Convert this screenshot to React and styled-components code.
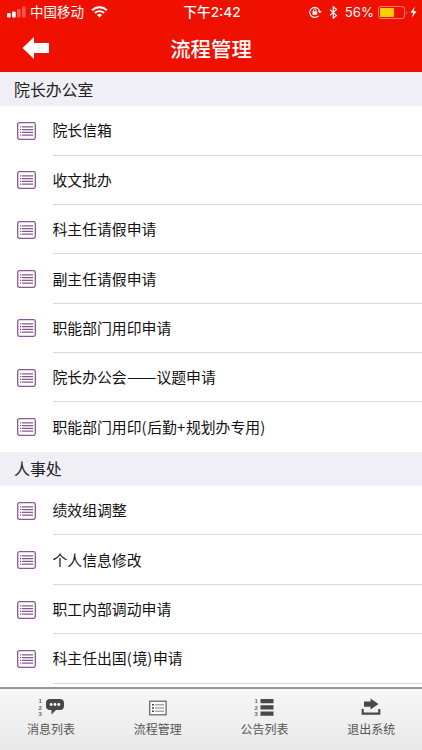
import React from 'react';
import styled, { createGlobalStyle } from 'styled-components';

const sections = [
  {
    title: '院长办公室',
    items: [
      '院长信箱',
      '收文批办',
      '科主任请假申请',
      '副主任请假申请',
      '职能部门用印申请',
      '院长办公会——议题申请',
      '职能部门用印(后勤+规划办专用)',
    ],
  },
  {
    title: '人事处',
    items: ['绩效组调整', '个人信息修改', '职工内部调动申请', '科主任出国(境)申请'],
  },
];

const Numbers = ({ x }) => (
  <g fontFamily="Liberation Sans, sans-serif" fontSize="6" fontWeight="700" fill="#666">
    <text x={x} y="5.4">1</text>
    <text x={x} y="11.7">2</text>
    <text x={x} y="18">3</text>
  </g>
);

const MessageIcon = () => (
  <svg width="27" height="20" viewBox="0 0 27 20">
    <Numbers x="0.5" />
    <path d="M12 1h10a4 4 0 0 1 4 4v3a4 4 0 0 1-4 4h-4l-4.500 4.500V12H12a4 4 0 0 1-4-4V5a4 4 0 0 1 4-4z" fill="#484848" />
    <circle cx="13.200" cy="6.500" r="1.400" fill="#fff" />
    <circle cx="17" cy="6.500" r="1.400" fill="#fff" />
    <circle cx="20.800" cy="6.500" r="1.400" fill="#fff" />
  </svg>
);

const ProcessIcon = () => (
  <svg width="18" height="20" viewBox="0 0 18 20">
    <rect x="0.700" y="3.200" width="16.400" height="13.600" fill="#fafafa" stroke="#606060" strokeWidth="1.200" />
    <path d="M3 6.800h2M3 10h2M3 13.200h2" stroke="#444" strokeWidth="1.600" />
    <path d="M6 6.800h9M6 10h9M6 13.200h9" stroke="#777" strokeWidth="0.900" />
  </svg>
);

const NoticeIcon = () => (
  <svg width="20" height="20" viewBox="0 0 20 20">
    <Numbers x="0.5" />
    <path d="M6.500 3.100h13M6.500 9.400h13M6.500 15.700h13" stroke="#484848" strokeWidth="4.200" />
  </svg>
);

const ExitIcon = () => (
  <svg width="20" height="20" viewBox="0 0 20 20">
    <path d="M3 3.500h6.500V0.500l8 5.500-8 5.500V8.800H3z" fill="#484848" />
    <path d="M1.700 11v4.600h16.600V11" fill="none" stroke="#484848" strokeWidth="2.100" />
  </svg>
);

const ListIcon = () => (
  <svg width="19" height="18" viewBox="0 0 19 18">
    <rect x="0.700" y="0.700" width="17.600" height="16.600" rx="1.800" fill="#fff" stroke="#8b5791" strokeWidth="1.300" />
    <path d="M3 4.800h1.200M3 7.600h1.200M3 10.400h1.200M3 13.200h1.200" stroke="#8b5791" strokeWidth="1.200" />
    <path d="M5 4.800h11M5 7.600h11M5 10.400h11M5 13.200h11" stroke="#8b5791" strokeWidth="1.200" />
  </svg>
);

const tabs = [
  { label: '消息列表', icon: <MessageIcon /> },
  { label: '流程管理', icon: <ProcessIcon /> },
  { label: '公告列表', icon: <NoticeIcon /> },
  { label: '退出系统', icon: <ExitIcon /> },
];

// brackets, plus signs and dashes take a little more room than the font gives them
const spaced = (text) =>
  text.split(/(——|[()+])/).map((part, i) => {
    if (part === '——') return <Dash key={i}>{part}</Dash>;
    return /^[()+]$/.test(part) ? <Mark key={i}>{part}</Mark> : part;
  });

const App = () => (
  <Screen lang="zh-CN">
    <GlobalStyle />
    <Header>
      <StatusBar>
        <StatusSide>
          <svg width="19" height="12" viewBox="0 0 19 12">
            <rect x="0" y="7" width="3.700" height="4.500" rx="1" fill="#fff" />
            <rect x="5" y="5.500" width="3.700" height="6" rx="1" fill="#fff" />
            <rect x="10" y="3" width="3.700" height="8.500" rx="1" fill="#fff" opacity="0.3" />
            <rect x="15" y="0.500" width="3.700" height="11" rx="1" fill="#fff" opacity="0.3" />
          </svg>
          <Carrier>中国移动</Carrier>
          <svg width="17" height="12" viewBox="0 0 17 12">
            <path d="M1.100 4.200a10.500 10.500 0 0 1 14.800 0" fill="none" stroke="#fff" strokeWidth="2" />
            <path d="M3.900 7a6.500 6.500 0 0 1 9.200 0" fill="none" stroke="#fff" strokeWidth="1.900" />
            <path d="M8.500 11.500L6 9a3.500 3.500 0 0 1 5 0z" fill="#fff" />
          </svg>
        </StatusSide>
        <Time>下午2:42</Time>
        <StatusSide $right>
          <svg width="13" height="12" viewBox="0 0 13 12">
            <path d="M9.500 9.800A5 5 0 1 1 10.700 5.300" fill="none" stroke="#fff" strokeWidth="1.100" />
            <path d="M8.900 5.100h3.800l-1.900 2.500z" fill="#fff" />
            <rect x="3.500" y="5.300" width="4.600" height="3.500" rx="0.400" fill="#fff" />
            <path d="M4.400 5.500V4.300a1.400 1.400 0 0 1 2.800 0v1.200" fill="none" stroke="#fff" strokeWidth="0.900" />
          </svg>
          <Bluetooth width="9" height="13" viewBox="0 0 9 13">
            <path d="M1 3.600l6.500 5.800-3.200 2.800V0.800l3.200 2.800L1 9.400" fill="none" stroke="#fff" strokeWidth="1.200" />
          </Bluetooth>
          <Percent>56%</Percent>
          <svg width="30" height="13" viewBox="0 0 30 13">
            <rect x="0.500" y="0.500" width="26" height="12" rx="2.500" fill="none" stroke="#fff" strokeOpacity="0.45" />
            <rect x="2" y="2" width="14" height="9" rx="0.800" fill="#ffcc00" />
            <path d="M28 4.500q1.500 2 0 4z" fill="#fff" opacity="0.450" />
          </svg>
          <Bolt width="7" height="12" viewBox="0 0 7 12">
            <path d="M4.700 0.500L0.500 6.700h2.600L2 11.500l4.500-6.300H3.700z" fill="#fff" />
          </Bolt>
        </StatusSide>
      </StatusBar>
      <NavBar>
        <BackButton aria-label="返回">
          <svg width="28" height="22" viewBox="0 0 28 22">
            <path d="M0.500 11L12 0v6h15v10H12v6z" fill="#fff" />
          </svg>
        </BackButton>
        <Title>流程管理</Title>
      </NavBar>
    </Header>
    <Content>
      {sections.map((section) => (
        <section key={section.title}>
          <SectionTitle>{section.title}</SectionTitle>
          {section.items.map((item, i) => (
            <Row key={item}>
              <ListIcon />
              <RowText $last={section.items.length === 7 && i === 6}>
                <span>{spaced(item)}</span>
              </RowText>
            </Row>
          ))}
        </section>
      ))}
    </Content>
    <TabBar>
      {tabs.map((tab) => (
        <Tab key={tab.label}>
          {tab.icon}
          <span>{tab.label}</span>
        </Tab>
      ))}
    </TabBar>
  </Screen>
);

const GlobalStyle = createGlobalStyle`
  * {
    box-sizing: border-box;
  }
  body {
    margin: 0;
    overflow: hidden;
    font-family: "Noto Sans CJK SC", sans-serif;
  }
  svg {
    display: block;
    flex-shrink: 0;
  }
`;
const Screen = styled.div`
  display: flex;
  flex-direction: column;
  width: 100%;
  height: 100vh;
  background: #fff;
`;
const Header = styled.header`
  flex: none;
  height: 72px;
  color: #fff;
  background: #f01000;
`;
const StatusBar = styled.div`
  display: grid;
  grid-template-columns: 1fr auto 1fr;
  align-items: center;
  height: 24px;
  padding: 0 5px 0 7px;
`;
const StatusSide = styled.div`
  display: flex;
  align-items: center;
  justify-content: ${({ $right }) => ($right ? 'flex-end' : 'flex-start')};
`;
const Carrier = styled.span`
  margin: -2px 7px 0 4px;
  font-size: 13.5px;
  line-height: 20px;
`;
const Time = styled.span`
  font-family: Inter, "Noto Sans CJK SC", sans-serif;
  font-size: 13.7px;
  font-weight: 500;
  line-height: 20px;
`;
const Bluetooth = styled.svg`
  margin-left: 7px;
`;
const Percent = styled.span`
  margin: 0 4px 0 7px;
  font-family: Inter, sans-serif;
  font-size: 13.2px;
  line-height: 20px;
`;
const Bolt = styled.svg`
  margin-left: 2px;
`;
const NavBar = styled.div`
  display: grid;
  grid-template-columns: 60px 1fr 60px;
  align-items: center;
  height: 47px;
`;
const BackButton = styled.button`
  padding: 0 0 0 22px;
  border: none;
  background: none;
`;
const Title = styled.h1`
  margin: 0;
  font-size: 20.4px;
  font-weight: 500;
  line-height: 30px;
  text-align: center;
`;
const Content = styled.main`
  flex: 1;
  min-height: 0;
  overflow: hidden;
`;
const SectionTitle = styled.h2`
  display: flex;
  align-items: center;
  height: 34.3px;
  margin: 0;
  padding-left: 14px;
  color: #222;
  background: #efeff5;
  font-size: 15.9px;
  font-weight: 400;
`;
const Row = styled.div`
  display: flex;
  align-items: center;
  height: 49.37px;
  padding-left: 17px;
`;
const RowText = styled.div`
  display: flex;
  align-items: center;
  flex: 1;
  height: 100%;
  margin-left: 16.5px;
  padding-bottom: 1px;
  border-bottom: 1px solid ${({ $last }) => ($last ? 'transparent' : '#d9d9db')};
  color: #111;
  font-size: 14.85px;
  white-space: nowrap;
`;
const Mark = styled.span`
  letter-spacing: 0.7px;
`;
const Dash = styled.span`
  display: inline-block;
  width: 2em;
  transform: scaleX(1.18);
  transform-origin: left;
`;
const TabBar = styled.nav`
  flex: none;
  display: grid;
  grid-template-columns: repeat(4, 106.7px);
  height: 63px;
  padding-top: 9px;
  border-top: 2px solid #98989a;
  background: linear-gradient(#f7f7f7, #e9e9e9);
`;
const Tab = styled.div`
  display: flex;
  flex-direction: column;
  align-items: center;
  padding-right: 4.5px;
  color: #555;
  font-size: 12px;
  line-height: 18px;
  span {
    margin-top: 2px;
  }
`;

export default App;
